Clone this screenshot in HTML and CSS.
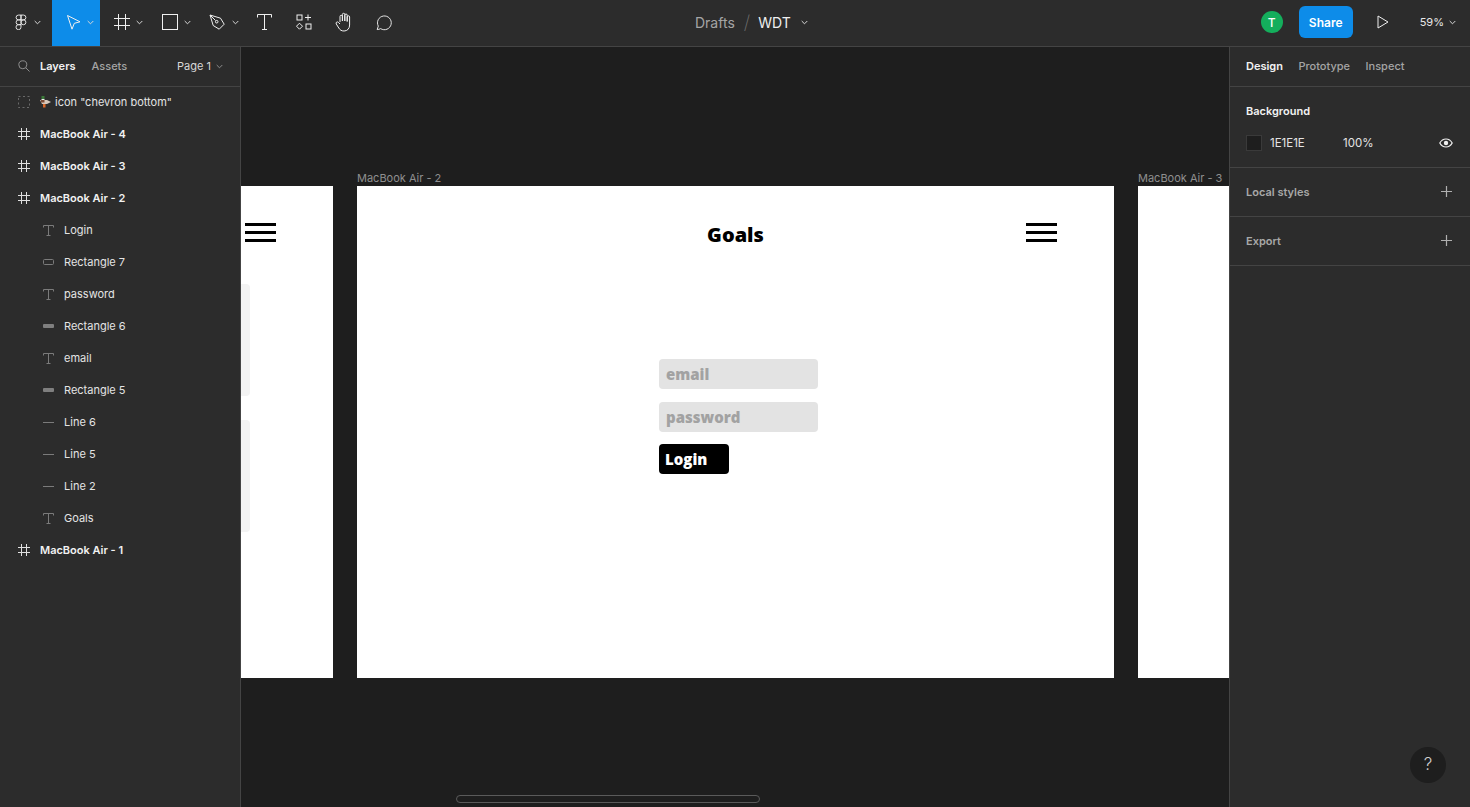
FILE: index.html
```html
<!DOCTYPE html>
<html lang="en">

<head>
    <meta charset="UTF-8">
    <meta name="viewport" content="width=device-width, initial-scale=1.0">
    <title>WDT - Figma</title>
    <link rel="stylesheet" href="styles.css">
</head>

<body>
    <header class="toolbar">
        <div class="tools">
            <div class="tool tool-logo">
                <svg width="12" height="16" viewBox="0 0 13 17" class="line-icon">
                    <path d="M6.5 1H3.8a2.6 2.6 0 0 0 0 5.2h2.7zM6.5 1h2.7a2.6 2.6 0 0 1 0 5.2H6.500zM6.500 6.200H3.800a2.600 2.600 0 0 0 0 5.200h2.700zM6.500 8.800a2.600 2.600 0 1 0 5.300 0 2.600 2.600 0 1 0-5.300 0zM6.500 11.400H3.800a2.700 2.700 0 1 0 2.700 2.700z" />
                </svg>
                <svg class="chev" width="7" height="5" viewBox="0 0 7 5"><path d="M.7 1l2.800 2.800L6.300 1" /></svg>
            </div>
            <div class="tool tool-wide active">
                <svg width="15" height="17" viewBox="0 0 15 17" class="line-icon">
                    <path d="M1.500 1.500l12.500 6.300-5.700 1.500-2.300 5.900z" />
                </svg>
                <svg class="chev" width="7" height="5" viewBox="0 0 7 5"><path d="M.7 1l2.800 2.800L6.300 1" /></svg>
            </div>
            <div class="tool tool-wide">
                <svg width="16" height="16" viewBox="0 0 16 16" class="line-icon">
                    <path d="M4.500 0v16M11.500 0v16M0 4.500h16M0 11.500h16" />
                </svg>
                <svg class="chev" width="7" height="5" viewBox="0 0 7 5"><path d="M.7 1l2.800 2.800L6.300 1" /></svg>
            </div>
            <div class="tool tool-wide">
                <svg width="16" height="16" viewBox="0 0 16 16" class="line-icon">
                    <rect x="0.500" y="0.500" width="15" height="15" />
                </svg>
                <svg class="chev" width="7" height="5" viewBox="0 0 7 5"><path d="M.7 1l2.800 2.800L6.300 1" /></svg>
            </div>
            <div class="tool tool-wide">
                <svg width="17" height="17" viewBox="0 0 17 17" class="line-icon">
                    <path d="M1 1l10.500 3.200 3.700 6-5 5-6-3.700z" />
                    <path d="M1 1l5.500 5.500" />
                    <circle cx="7.700" cy="7.700" r="1.300" />
                </svg>
                <svg class="chev" width="7" height="5" viewBox="0 0 7 5"><path d="M.7 1l2.800 2.800L6.300 1" /></svg>
            </div>
            <div class="tool tool-narrow">
                <svg width="15" height="16" viewBox="0 0 15 16" class="line-icon">
                    <path d="M.5.500h14v3M.5.500v3M7.500.500v15M5 15.500h5" />
                </svg>
            </div>
            <div class="tool tool-narrow">
                <svg width="16" height="16" viewBox="0 0 16 16" class="line-icon">
                    <rect x="1" y="1" width="5" height="5" />
                    <path d="M12 .5v6M9 3.500h6" />
                    <path d="M3.500 9.200l3 3-3 3-3-3z" />
                    <rect x="10" y="10" width="5" height="5" />
                </svg>
            </div>
            <div class="tool tool-narrow">
                <svg width="18" height="20" viewBox="0 0 18 20" class="line-icon">
                    <path d="M5 10V4.500a1.200 1.200 0 0 1 2.400 0V9M7.400 9V2.500a1.200 1.200 0 0 1 2.400 0V9M9.800 9V3.200a1.200 1.200 0 0 1 2.400 0V9.500M12.200 9.500V5a1.200 1.200 0 0 1 2.400 0v8c0 3.500-2.200 6-5.500 6-2.800 0-4-1-5.300-3L1.300 12c-.9-1.400.8-2.800 2-1.700L5 12" />
                </svg>
            </div>
            <div class="tool tool-narrow tool-comment">
                <svg width="17" height="17" viewBox="0 0 18 18" class="line-icon">
                    <path d="M2.300 16.500l1.200-3.700A7.300 7.300 0 1 1 6 15.500c-1.200.5-2.500 1-3.700 1z" />
                </svg>
            </div>
        </div>

        <div class="file-title">
            <span class="title-folder">Drafts</span>
            <span class="title-slash">/</span>
            <span class="title-name">WDT</span>
            <svg class="chev" width="7" height="5" viewBox="0 0 7 5"><path d="M.7 1l2.800 2.800L6.300 1" /></svg>
        </div>

        <div class="toolbar-right">
            <div class="avatar">T</div>
            <button class="share-btn">Share</button>
            <svg class="play-icon line-icon" width="12" height="14" viewBox="0 0 12 14">
                <path d="M1 1l10 6-10 6z" />
            </svg>
            <div class="zoom-level">59%
                <svg class="chev" width="7" height="5" viewBox="0 0 7 5"><path d="M.7 1l2.800 2.800L6.300 1" /></svg>
            </div>
        </div>
    </header>

    <div class="workspace">
        <aside class="left-panel">
            <div class="panel-tabs">
                <svg class="search-icon" width="12" height="12" viewBox="0 0 12 12">
                    <circle cx="4.800" cy="4.800" r="4" />
                    <path d="M7.800 7.800l3.700 3.700" />
                </svg>
                <span class="tab tab-active">Layers</span>
                <span class="tab">Assets</span>
                <span class="page-select">Page 1
                    <svg class="chev chev-dim" width="7" height="5" viewBox="0 0 7 5"><path d="M.7 1l2.800 2.800L6.300 1" /></svg>
                </span>
            </div>

            <ul class="layers">
                <li class="layer">
                    <svg class="layer-icon" width="12" height="12" viewBox="0 0 12 12">
                        <rect x="0.500" y="0.500" width="11" height="11" class="dashed" />
                    </svg>
                    <svg class="duck" width="11" height="12" viewBox="0 0 11 12">
                        <path d="M1.500 0h3v3h-3z" fill="#3c7a3a" />
                        <path d="M1.500 3h3v1h-3z" fill="#f2f2f2" />
                        <path d="M0 4h7l4 2-4 2H2z" fill="#d8c8ba" />
                        <path d="M1 4h3.500v2.500H1z" fill="#7a4a35" />
                        <path d="M3 8h2.500v3.500H3z" fill="#d9682a" />
                    </svg>
                    <span class="layer-name">icon "chevron bottom"</span>
                </li>
                <li class="layer layer-frame">
                    <svg class="layer-icon" width="12" height="12" viewBox="0 0 12 12"><path d="M3.500 0v12M8.500 0v12M0 3.500h12M0 8.500h12" /></svg>
                    <span class="layer-name">MacBook Air - 4</span>
                </li>
                <li class="layer layer-frame">
                    <svg class="layer-icon" width="12" height="12" viewBox="0 0 12 12"><path d="M3.500 0v12M8.500 0v12M0 3.500h12M0 8.500h12" /></svg>
                    <span class="layer-name">MacBook Air - 3</span>
                </li>
                <li class="layer layer-frame">
                    <svg class="layer-icon" width="12" height="12" viewBox="0 0 12 12"><path d="M3.500 0v12M8.500 0v12M0 3.500h12M0 8.500h12" /></svg>
                    <span class="layer-name">MacBook Air - 2</span>
                </li>
                <li class="layer layer-child">
                    <svg class="layer-icon" width="11" height="11" viewBox="0 0 11 11"><path d="M.5 2.500V.5h10v2M5.500.5v10M3.500 10.500h4" /></svg>
                    <span class="layer-name">Login</span>
                </li>
                <li class="layer layer-child">
                    <svg class="layer-icon" width="11" height="6" viewBox="0 0 11 6"><rect x="0.500" y="0.500" width="10" height="5" rx="1" /></svg>
                    <span class="layer-name">Rectangle 7</span>
                </li>
                <li class="layer layer-child">
                    <svg class="layer-icon" width="11" height="11" viewBox="0 0 11 11"><path d="M.5 2.500V.5h10v2M5.500.5v10M3.500 10.500h4" /></svg>
                    <span class="layer-name">password</span>
                </li>
                <li class="layer layer-child">
                    <svg class="layer-icon" width="11" height="4" viewBox="0 0 11 4"><rect width="11" height="4" rx="1" class="solid" /></svg>
                    <span class="layer-name">Rectangle 6</span>
                </li>
                <li class="layer layer-child">
                    <svg class="layer-icon" width="11" height="11" viewBox="0 0 11 11"><path d="M.5 2.500V.5h10v2M5.500.5v10M3.500 10.500h4" /></svg>
                    <span class="layer-name">email</span>
                </li>
                <li class="layer layer-child">
                    <svg class="layer-icon" width="11" height="4" viewBox="0 0 11 4"><rect width="11" height="4" rx="1" class="solid" /></svg>
                    <span class="layer-name">Rectangle 5</span>
                </li>
                <li class="layer layer-child">
                    <svg class="layer-icon" width="11" height="1" viewBox="0 0 11 1"><path d="M0 .5h11" /></svg>
                    <span class="layer-name">Line 6</span>
                </li>
                <li class="layer layer-child">
                    <svg class="layer-icon" width="11" height="1" viewBox="0 0 11 1"><path d="M0 .5h11" /></svg>
                    <span class="layer-name">Line 5</span>
                </li>
                <li class="layer layer-child">
                    <svg class="layer-icon" width="11" height="1" viewBox="0 0 11 1"><path d="M0 .5h11" /></svg>
                    <span class="layer-name">Line 2</span>
                </li>
                <li class="layer layer-child">
                    <svg class="layer-icon" width="11" height="11" viewBox="0 0 11 11"><path d="M.5 2.500V.5h10v2M5.500.5v10M3.500 10.500h4" /></svg>
                    <span class="layer-name">Goals</span>
                </li>
                <li class="layer layer-frame">
                    <svg class="layer-icon" width="12" height="12" viewBox="0 0 12 12"><path d="M3.500 0v12M8.500 0v12M0 3.500h12M0 8.500h12" /></svg>
                    <span class="layer-name">MacBook Air - 1</span>
                </li>
            </ul>
        </aside>

        <main class="canvas">
            <div class="frame frame-left">
                <div class="burger"><span></span><span></span><span></span></div>
                <div class="ghost-card ghost-one"></div>
                <div class="ghost-card ghost-two"></div>
            </div>

            <div class="frame-label label-main">MacBook Air - 2</div>
            <div class="frame frame-main">
                <h1 class="goals">Goals</h1>
                <div class="burger"><span></span><span></span><span></span></div>
                <div class="login-form">
                    <div class="field">email</div>
                    <div class="field">password</div>
                    <div class="login-btn">Login</div>
                </div>
            </div>

            <div class="frame-label label-right">MacBook Air - 3</div>
            <div class="frame frame-right"></div>

            <div class="scrollbar"></div>
        </main>

        <aside class="right-panel">
            <div class="panel-tabs right-tabs">
                <span class="tab tab-active">Design</span>
                <span class="tab">Prototype</span>
                <span class="tab">Inspect</span>
            </div>

            <section class="section section-bg">
                <div class="section-title">Background</div>
                <div class="bg-row">
                    <span class="swatch"></span>
                    <span class="bg-hex">1E1E1E</span>
                    <span class="bg-opacity">100%</span>
                    <svg class="eye-icon" width="14" height="10" viewBox="0 0 14 10">
                        <path d="M.8 5C2.300 2.300 4.500 1 7 1s4.700 1.300 6.200 4C11.700 7.700 9.500 9 7 9S2.300 7.700.8 5z" />
                        <circle cx="7" cy="5" r="2.200" class="solid" />
                    </svg>
                </div>
            </section>

            <section class="section section-row">
                <span class="section-title dim">Local styles</span>
                <svg class="plus-icon" width="11" height="11" viewBox="0 0 11 11"><path d="M5.500 0v11M0 5.500h11" /></svg>
            </section>

            <section class="section section-row">
                <span class="section-title dim">Export</span>
                <svg class="plus-icon" width="11" height="11" viewBox="0 0 11 11"><path d="M5.500 0v11M0 5.500h11" /></svg>
            </section>

            <div class="help-btn">?</div>
        </aside>
    </div>
</body>

</html>
```

FILE: styles.css
```css
* {
    box-sizing: border-box;
}

html,
body {
    height: 100%;
}

body {
    margin: 0;
    height: 807px;
    overflow: hidden;
    display: flex;
    flex-direction: column;
    font-family: Inter, "Liberation Sans", sans-serif;
    font-size: 11px;
    color: #fff;
    background: #2c2c2c;
}

svg {
    display: block;
    flex-shrink: 0;
    fill: none;
}

.line-icon path,
.line-icon rect,
.line-icon circle {
    fill: none;
    stroke: #f0f0f0;
    stroke-width: 1;
}

.chev path {
    fill: none;
    stroke: #d8d8d8;
    stroke-width: 1;
}

.chev-dim path {
    stroke: #8c8c8c;
}

/* top bar */
.toolbar {
    height: 47px;
    flex-shrink: 0;
    display: flex;
    align-items: flex-start;
    background: #2c2c2c;
    border-bottom: 1px solid #444;
}

.tools {
    width: 404px;
    height: 46px;
    display: flex;
}

.tool {
    height: 46px;
    padding-bottom: 2px;
    display: flex;
    align-items: center;
    justify-content: center;
}

.tool-logo {
    width: 52px;
    gap: 7px;
    padding-left: 15px;
    justify-content: flex-start;
}

.tool-wide {
    width: 48px;
    gap: 6px;
    padding-left: 8px;
}

.tool-narrow {
    width: 40px;
}

.tool-comment {
    padding-right: 2px;
}

.tool.active {
    background: #0d8ce9;
}

.file-title {
    height: 44px;
    display: flex;
    align-items: center;
    margin-left: 291px;
    font-size: 14px;
}

.title-folder {
    color: #a5a5a5;
}

.title-slash {
    margin: 0 8px 0 9px;
    font-size: 19px;
    font-weight: 200;
    color: #6f6f6f;
}

.title-name {
    color: #efefef;
    margin-right: 10px;
}

.toolbar-right {
    height: 44px;
    margin-left: auto;
    display: flex;
    align-items: center;
    padding-right: 14px;
}

.avatar {
    width: 22px;
    height: 22px;
    border-radius: 50%;
    background: #14ae5c;
    display: flex;
    align-items: center;
    justify-content: center;
    font-size: 12px;
    font-weight: 500;
}

.share-btn {
    width: 54px;
    height: 32px;
    margin-left: 16px;
    border: none;
    border-radius: 6px;
    background: #0d8ce9;
    color: #fff;
    font-family: inherit;
    font-size: 12px;
    font-weight: 600;
}

.play-icon {
    margin-left: 24px;
}

.zoom-level {
    margin-left: 31px;
    display: flex;
    align-items: center;
    gap: 5px;
    font-size: 11px;
    color: #e8e8e8;
}

/* columns */
.workspace {
    flex: 1;
    min-height: 0;
    display: flex;
}

.left-panel {
    width: 241px;
    flex-shrink: 0;
    border-right: 1px solid #444;
    background: #2c2c2c;
}

.right-panel {
    position: relative;
    flex: 1;
    border-left: 1px solid #444;
    background: #2c2c2c;
}

.panel-tabs {
    height: 40px;
    display: flex;
    align-items: center;
    border-bottom: 1px solid #444;
    padding: 0 0 1px 18px;
}

.right-tabs {
    padding-left: 16px;
    gap: 15.500px;
}

.tab {
    color: #a5a5a5;
    font-weight: 500;
}

.tab-active {
    color: #f2f2f2;
    font-weight: 600;
}

.search-icon {
    margin-right: 10px;
}

.search-icon circle,
.search-icon path {
    stroke: #8e8e8e;
}

.left-panel .tab {
    margin-right: 16px;
}

.page-select {
    margin-left: auto;
    padding-right: 17px;
    display: flex;
    align-items: center;
    gap: 5px;
    color: #d8d8d8;
}

/* layers */
.layers {
    list-style: none;
    margin: -1px 0 0;
    padding: 0;
}

.layer {
    height: 32px;
    display: flex;
    align-items: center;
    padding-left: 18px;
    color: #e4e4e4;
}

.layer-icon {
    margin-right: 10px;
}

.layer-icon path,
.layer-icon rect {
    stroke: #7b7b7b;
}

.layer-icon .dashed {
    stroke: #6a6a6a;
    stroke-dasharray: 2 2.500;
}

.layer-icon .solid {
    fill: #7f7f7f;
    stroke: none;
}

.layer-frame .layer-icon path {
    stroke: #e0e0e0;
}

.layer-frame {
    font-weight: 600;
    color: #f2f2f2;
}

.layer-child {
    padding-left: 43px;
}

.duck {
    margin-right: 4px;
}

/* canvas */
.canvas {
    position: relative;
    flex: 0 0 988px;
    overflow: hidden;
    background: #1e1e1e;
}

.frame {
    position: absolute;
    top: 139px;
    height: 492px;
    background: #fff;
}

.frame-left {
    left: -100px;
    width: 192px;
}

.frame-main {
    left: 116px;
    width: 757px;
}

.frame-right {
    left: 897px;
    width: 120px;
}

.frame-label {
    position: absolute;
    top: 124px;
    color: #8f8f8f;
    font-size: 11px;
}

.label-main {
    left: 116px;
}

.label-right {
    left: 897px;
}

.burger {
    position: absolute;
    top: 37px;
    width: 31px;
    display: flex;
    flex-direction: column;
    gap: 5px;
}

.burger span {
    height: 3px;
    background: #000;
}

.frame-left .burger {
    left: 104px;
}

.frame-main .burger {
    left: 669px;
}

.ghost-card {
    position: absolute;
    left: 100px;
    width: 9px;
    height: 112px;
    background: #f3f3f3;
    border-radius: 0 4px 4px 0;
}

.ghost-one {
    top: 98px;
}

.ghost-two {
    top: 234px;
}

.goals {
    margin: 0;
    padding-top: 33px;
    text-align: center;
    color: #000;
    font-family: "Open Sans", sans-serif;
    font-size: 20px;
    font-weight: 800;
    line-height: 32px;
}

.login-form {
    margin: 108px 0 0 302px;
    width: 159px;
    display: flex;
    flex-direction: column;
    gap: 13px;
    font-family: "Open Sans", sans-serif;
    font-size: 15px;
    font-weight: 800;
}

.field {
    height: 30px;
    padding-left: 7px;
    border-radius: 4px;
    background: #e3e3e3;
    color: #a2a2a2;
    line-height: 30px;
}

.login-btn {
    width: 70px;
    height: 30px;
    margin-top: -1px;
    padding-left: 6px;
    border-radius: 4px;
    background: #000;
    color: #fff;
    line-height: 30px;
}

.scrollbar {
    position: absolute;
    left: 215px;
    top: 748px;
    width: 304px;
    height: 8px;
    border: 1px solid #5a5a5a;
    border-radius: 4px;
}

/* right panel */
.section {
    padding: 0 16px;
    border-bottom: 1px solid #444;
}

.section-bg {
    height: 81px;
    padding-top: 17px;
}

.section-title {
    font-weight: 600;
    color: #f2f2f2;
}

.section-title.dim {
    color: #a8a8a8;
}

.section-row {
    height: 49px;
    padding-bottom: 1px;
    display: flex;
    align-items: center;
    justify-content: space-between;
}

.bg-row {
    margin-top: 17px;
    display: flex;
    align-items: center;
    color: #e4e4e4;
}

.swatch {
    width: 16px;
    height: 16px;
    background: #1e1e1e;
    border: 1px solid #3a3a3a;
}

.bg-hex {
    margin-left: 8px;
    width: 73px;
    font-size: 11.500px;
}

.bg-opacity {
    width: 96px;
    font-size: 11.500px;
}

.eye-icon path {
    stroke: #f0f0f0;
    stroke-width: 1.200;
}

.eye-icon .solid {
    fill: #f0f0f0;
}

.plus-icon {
    margin-right: 2px;
}

.plus-icon path {
    stroke: #b0b0b0;
    stroke-width: 1.200;
}

.help-btn {
    position: absolute;
    right: 24px;
    bottom: 24px;
    width: 36px;
    height: 36px;
    padding-bottom: 2px;
    border-radius: 50%;
    background: #1e1e1e;
    display: flex;
    align-items: center;
    justify-content: center;
    color: #cfcfcf;
    font-size: 17px;
    font-weight: 300;
}
```
